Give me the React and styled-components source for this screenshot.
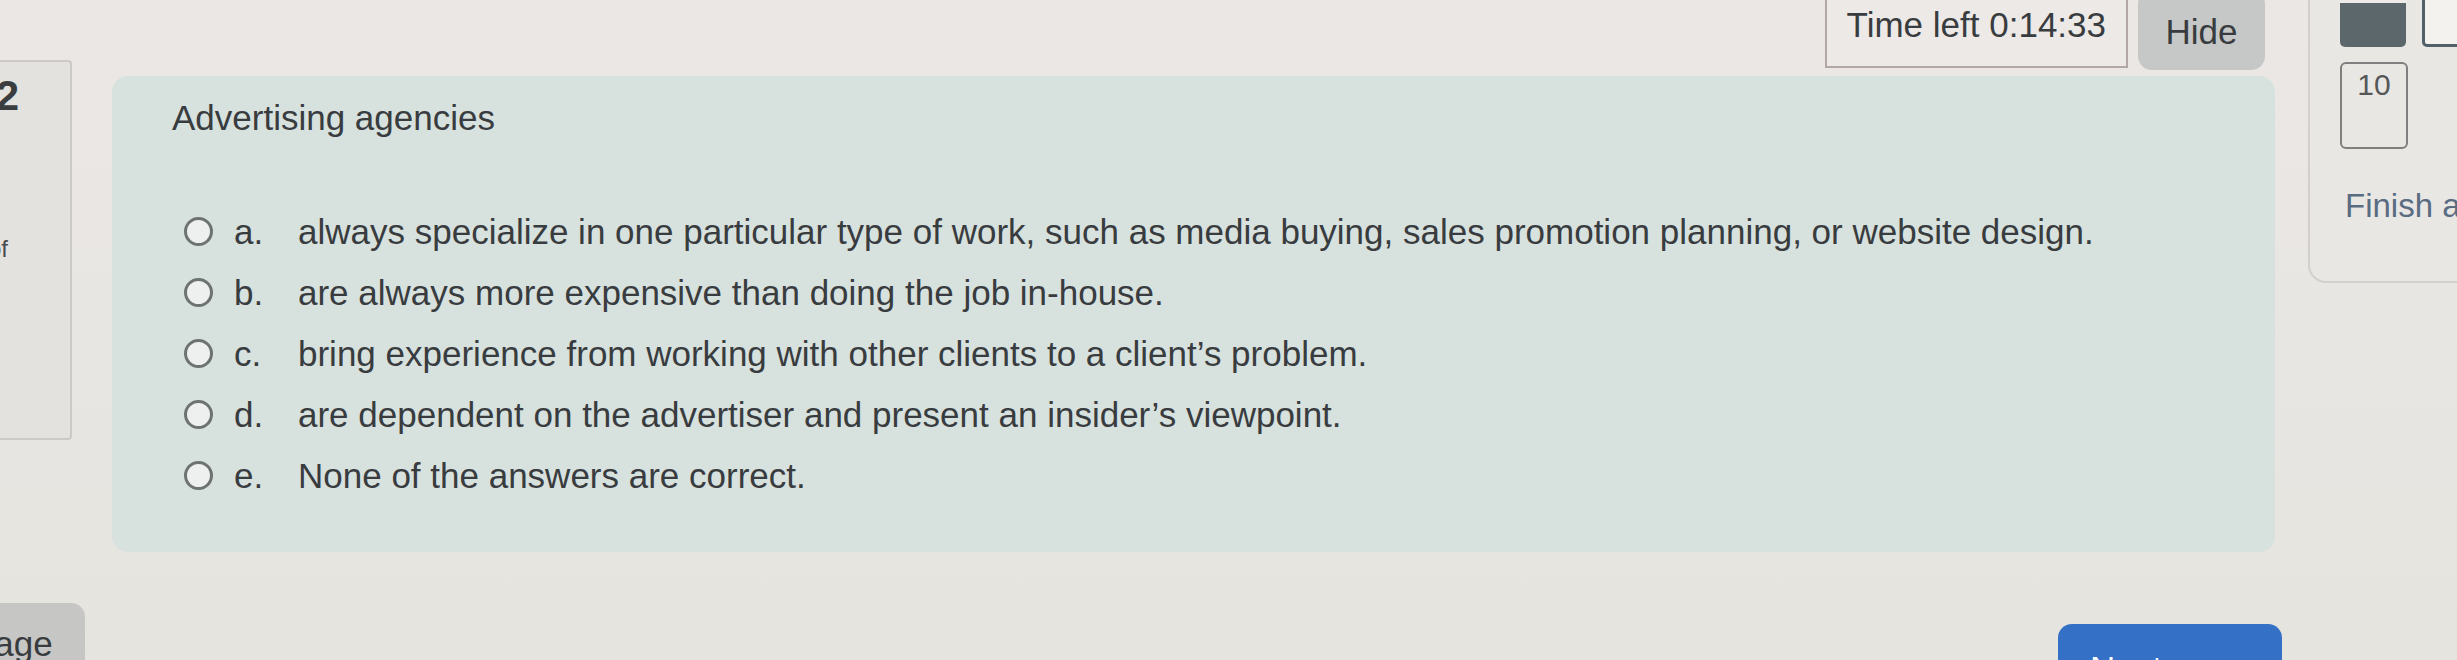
import React from "react";
import styled, { createGlobalStyle } from "styled-components";

const Global = createGlobalStyle`
  html, body { margin: 0; padding: 0; }
  body {
    width: 2457px;
    height: 660px;
    overflow: hidden;
    background: linear-gradient(180deg, #ebe7e5 0%, #e8e6e2 50%, #e6e4df 100%);
    font-family: "Liberation Sans", Arial, sans-serif;
    color: #393c3f;
  }
  #root { width: 100%; height: 100%; }
`;

const Page = styled.div`
  display: flex;
  width: 2457px;
  height: 660px;
  overflow: hidden;
`;

const Content = styled.div`
  flex: none;
  width: 2282px;
  display: flex;
  flex-direction: column;
`;

const TopBar = styled.div`
  height: 68px;
  display: flex;
  justify-content: flex-end;
  align-items: flex-start;
  gap: 10px;
  padding-right: 17px;
`;

const Timer = styled.div`
  margin-top: -10px;
  height: 78px;
  box-sizing: border-box;
  padding: 12px 20px 0;
  border: 2px solid #b3a6a6;
  background: #ece9e7;
  font-size: 35px;
  line-height: 42px;
  white-space: nowrap;
`;

const HideButton = styled.div`
  margin-top: -10px;
  width: 127px;
  height: 80px;
  box-sizing: border-box;
  padding-top: 21px;
  border-radius: 14px;
  background: #c6c8c7;
  font-size: 35px;
  line-height: 42px;
  text-align: center;
`;

const QuestionRow = styled.div`
  display: flex;
  align-items: flex-start;
  gap: 40px;
`;

const InfoBox = styled.div`
  flex: none;
  margin: -8px 0 0 -200px;
  width: 272px;
  height: 380px;
  box-sizing: border-box;
  border: 2px solid #cdc9c5;
  border-radius: 4px;
  background: #e4e2de;
  overflow: hidden;
`;

const InfoText = styled.div`
  width: 206px;
  text-align: right;
  white-space: nowrap;
`;

const QuestionNo = styled.div`
  padding-top: 9px;
  font-size: 42px;
  line-height: 50px;
  font-weight: 700;
  color: #3a3c3e;
`;

const InfoLine = styled.div`
  margin-top: 113px;
  font-size: 24px;
  line-height: 30px;
  color: #4a4c4e;
`;

const Card = styled.div`
  flex: none;
  margin-top: 8px;
  width: 2163px;
  height: 476px;
  box-sizing: border-box;
  padding: 21px 0 0 60px;
  border-radius: 16px;
  background: #d7e1de;
`;

const Title = styled.div`
  font-size: 35px;
  line-height: 42px;
`;

const Options = styled.div`
  margin: 62px 0 0 12px;
  display: flex;
  flex-direction: column;
`;

const Option = styled.div`
  height: 61px;
  display: flex;
  align-items: center;
  font-size: 35px;
  white-space: nowrap;
`;

const Radio = styled.span`
  flex: none;
  width: 29px;
  height: 29px;
  box-sizing: border-box;
  border: 3px solid #6d7371;
  border-radius: 50%;
  background: #eef0ef;
  margin-right: 21px;
`;

const Letter = styled.span`
  flex: none;
  width: 64px;
`;

const BottomBar = styled.div`
  margin-top: 51px;
  display: flex;
  justify-content: space-between;
  align-items: flex-start;
`;

const PrevButton = styled.div`
  margin-left: -201px;
  height: 80px;
  box-sizing: border-box;
  padding: 20px 32px 0 30px;
  border-radius: 14px;
  background: #c6c6c5;
  font-size: 35px;
  line-height: 42px;
  white-space: nowrap;
`;

const NextButton = styled.div`
  margin-top: 21px;
  width: 224px;
  height: 60px;
  box-sizing: border-box;
  padding: 24px 0 0 32px;
  border-radius: 14px;
  background: #3470c6;
  color: #ffffff;
  font-size: 35px;
  line-height: 42px;
  white-space: nowrap;
`;

const NavPanel = styled.div`
  flex: none;
  margin: -10px 0 0 26px;
  width: 200px;
  height: 293px;
  box-sizing: border-box;
  padding-left: 30px;
  border: 2px solid #d3d0cc;
  border-right: none;
  border-radius: 0 0 0 18px;
  background: #e9e7e4;
  display: flex;
  flex-direction: column;
  align-items: flex-start;
`;

const NavRow = styled.div`
  display: flex;
  gap: 16px;
`;

const QnButton = styled.div`
  width: 66px;
  height: 55px;
  box-sizing: border-box;
  border-radius: 0 0 5px 5px;
  ${(p) =>
    p.$dark
      ? `background: linear-gradient(180deg, #ecebe8 0 11px, #5b676b 11px);`
      : `background: #f3f2ef; border: 3px solid #52606a; border-top: none;`}
`;

const QnBox = styled.div`
  margin-top: 15px;
  width: 68px;
  height: 87px;
  box-sizing: border-box;
  padding-top: 3px;
  border: 2px solid #7f7f7f;
  border-radius: 6px;
  background: #e9e7e3;
  font-size: 30px;
  line-height: 36px;
  text-align: center;
  color: #555759;
`;

const FinishLink = styled.div`
  margin: 38px 0 0 5px;
  font-size: 33px;
  line-height: 38px;
  color: #5a6c82;
  white-space: nowrap;
`;

const options = [
  ["a.", "always specialize in one particular type of work, such as media buying, sales promotion planning, or website design."],
  ["b.", "are always more expensive than doing the job in-house."],
  ["c.", "bring experience from working with other clients to a client’s problem."],
  ["d.", "are dependent on the advertiser and present an insider’s viewpoint."],
  ["e.", "None of the answers are correct."],
];

export default function App() {
  return (
    <>
      <Global />
      <Page>
        <Content>
          <TopBar>
            <Timer>Time left 0:14:33</Timer>
            <HideButton>Hide</HideButton>
          </TopBar>
          <QuestionRow>
            <InfoBox>
              <InfoText>
                <QuestionNo>Question 2</QuestionNo>
                <InfoLine>Marked out of</InfoLine>
              </InfoText>
            </InfoBox>
            <Card>
              <Title>Advertising agencies</Title>
              <Options>
                {options.map(([letter, text]) => (
                  <Option key={letter}>
                    <Radio />
                    <Letter>{letter}</Letter>
                    <span>{text}</span>
                  </Option>
                ))}
              </Options>
            </Card>
          </QuestionRow>
          <BottomBar>
            <PrevButton>Previous page</PrevButton>
            <NextButton>Next page</NextButton>
          </BottomBar>
        </Content>
        <NavPanel>
          <NavRow>
            <QnButton $dark />
            <QnButton />
          </NavRow>
          <QnBox>10</QnBox>
          <FinishLink>Finish attempt ...</FinishLink>
        </NavPanel>
      </Page>
    </>
  );
}
